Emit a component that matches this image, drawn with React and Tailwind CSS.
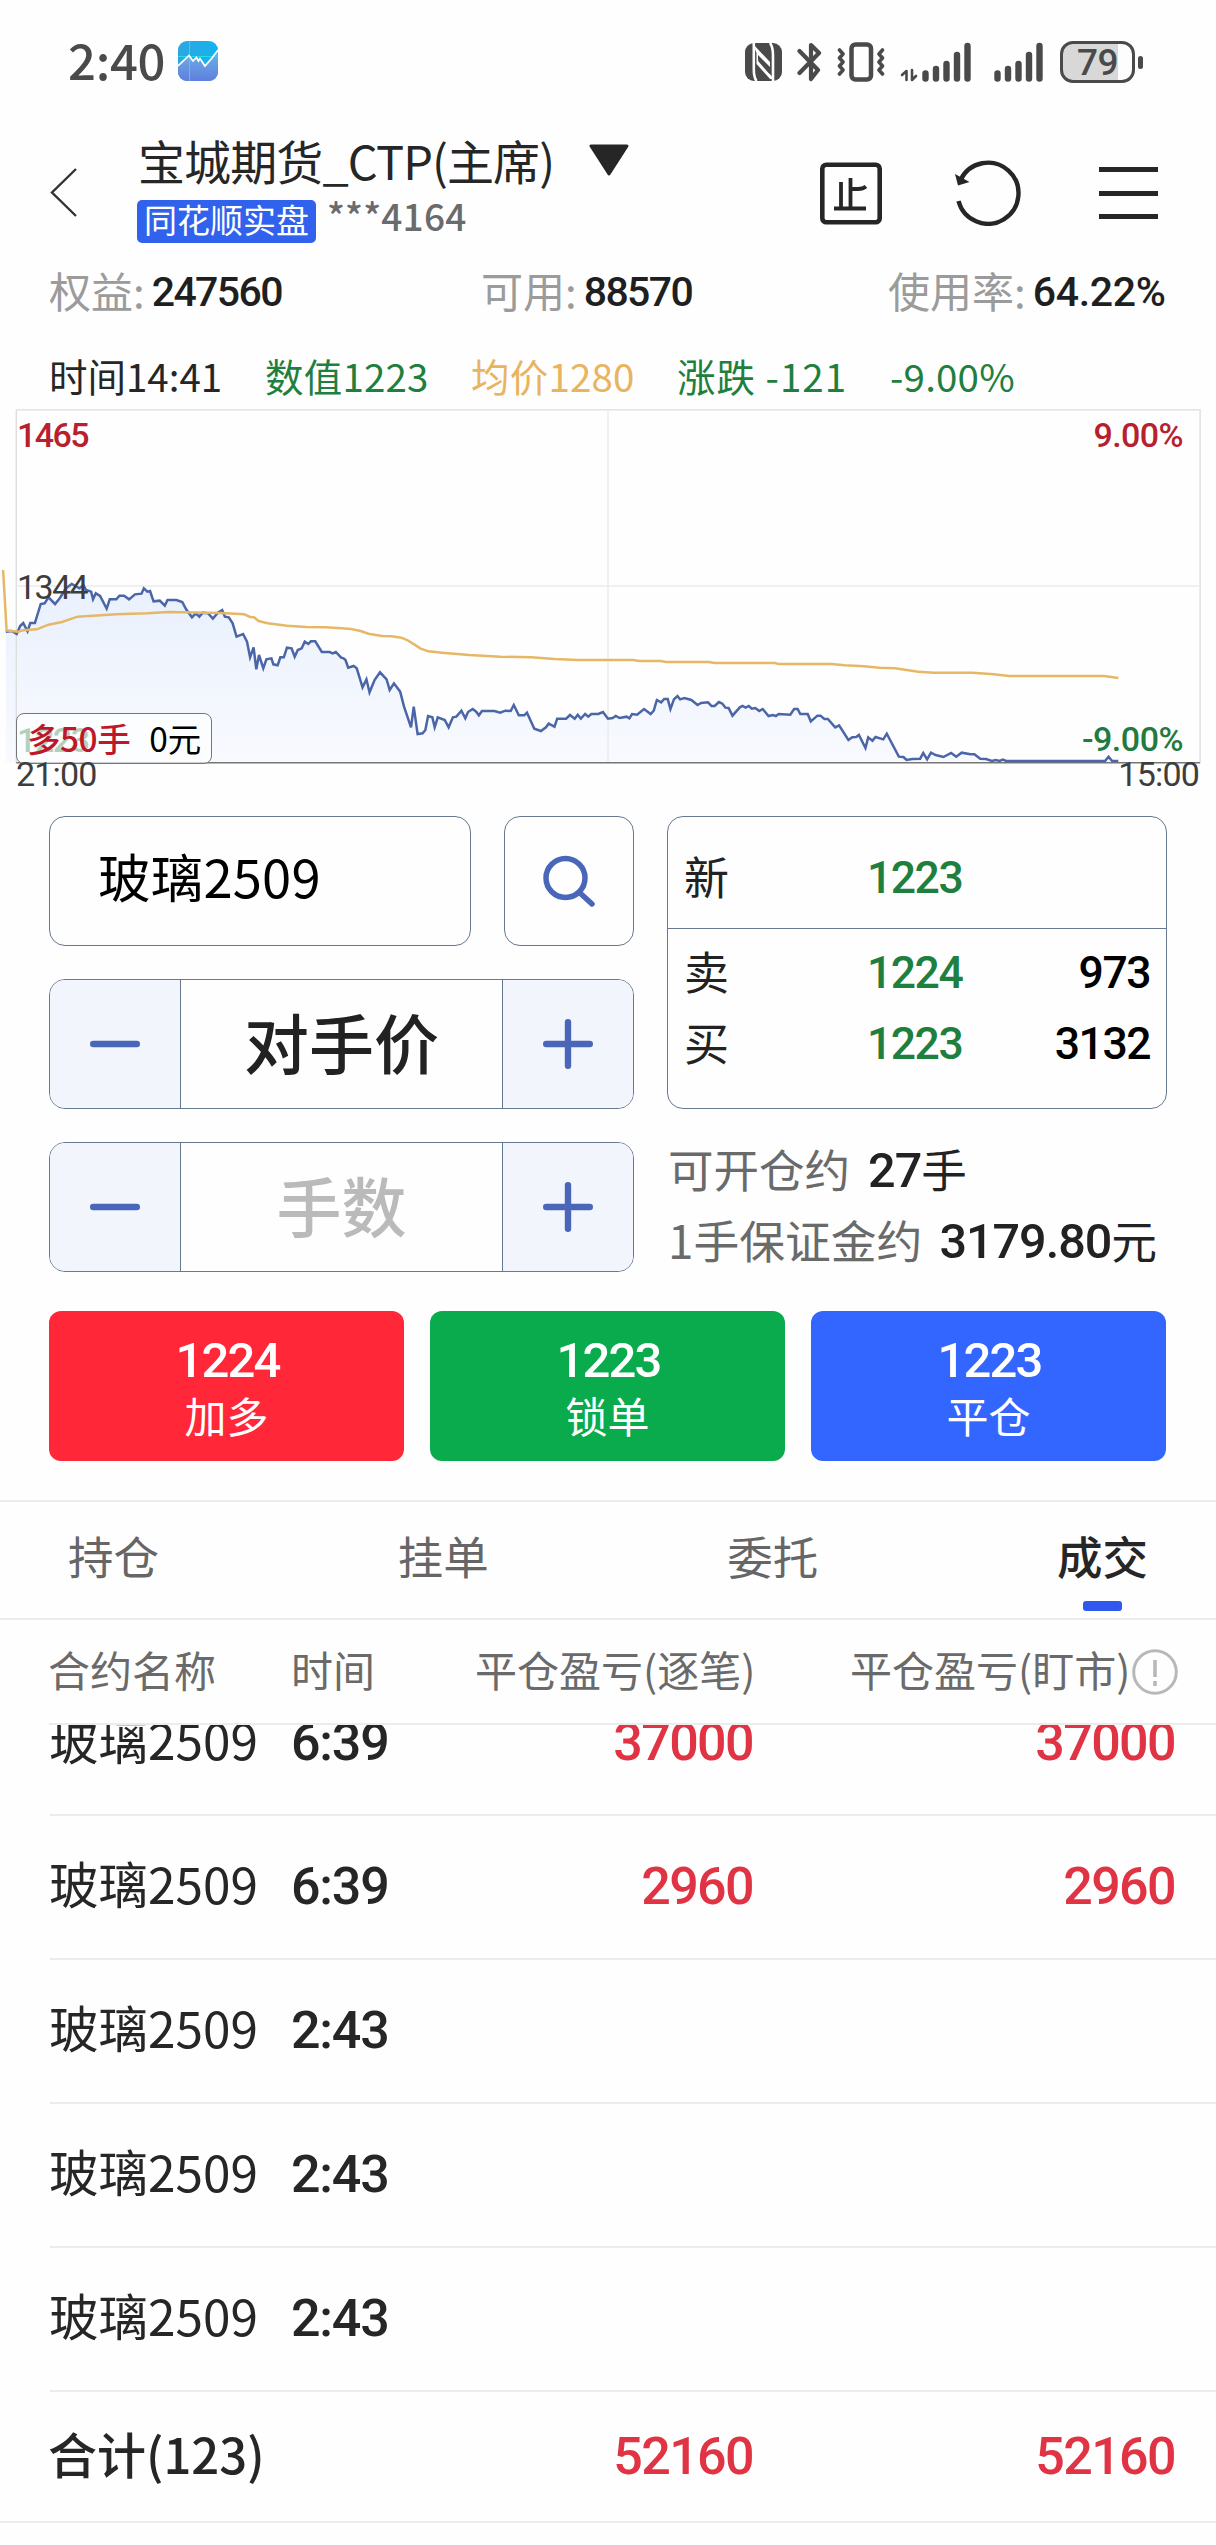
const price = [15,905,30,903,43,912,52,888,60,879,71,904,78,879,90,879,105,822,115,820,125,802,142,822,155,803,170,775,185,762,205,775,215,765,222,780,235,785,240,808,247,790,258,798,275,836,283,808,300,808,308,797,320,797,333,808,348,793,365,791,371,775,380,785,387,783,396,814,412,812,425,827,432,810,455,810,470,816,480,838,495,862,505,850,514,860,523,848,537,850,549,866,562,848,573,840,580,860,590,862,600,880,610,920,627,912,637,935,645,982,654,952,661,1018,668,975,679,1015,687,988,700,985,705,1003,716,1006,723,982,732,982,740,953,752,955,760,980,768,960,778,955,786,935,795,942,802,934,813,934,830,966,850,966,858,970,866,966,880,983,886,985,891,990,898,1013,912,1008,920,1015,935,1072,945,1048,953,1087,966,1050,980,1027,997,1048,1005,1080,1016,1060,1032,1085,1042,1130,1060,1192,1067,1130,1077,1212,1090,1210,1097,1200,1104,1158,1115,1162,1121,1192,1129,1162,1147,1170,1157,1192,1168,1162,1177,1160,1190,1142,1200,1165,1207,1146,1219,1137,1228,1145,1235,1156,1243,1143,1275,1143,1290,1148,1303,1142,1317,1143,1325,1125,1338,1156,1352,1156,1359,1148,1370,1176,1378,1196,1395,1203,1408,1192,1415,1181,1430,1190,1437,1166,1460,1166,1470,1155,1482,1166,1490,1154,1498,1166,1509,1152,1517,1160,1525,1152,1543,1152,1555,1146,1568,1166,1580,1164,1588,1158,1598,1164,1616,1160,1623,1165,1630,1152,1643,1154,1661,1137,1678,1152,1686,1142,1694,1110,1705,1117,1713,1107,1722,1107,1729,1137,1738,1108,1747,1098,1754,1108,1765,1104,1783,1110,1799,1125,1808,1119,1826,1117,1835,1128,1843,1128,1854,1116,1863,1121,1871,1133,1879,1134,1889,1157,1908,1132,1915,1128,1923,1133,1931,1128,1939,1136,1948,1134,1958,1143,1967,1137,1982,1158,1993,1155,2001,1158,2008,1152,2038,1154,2048,1137,2057,1137,2064,1152,2083,1152,2091,1174,2108,1157,2116,1157,2126,1167,2135,1167,2154,1192,2164,1186,2188,1230,2198,1222,2208,1221,2215,1215,2232,1254,2239,1222,2250,1232,2258,1221,2278,1228,2287,1211,2318,1280,2330,1281,2338,1290,2353,1287,2373,1286,2381,1269,2391,1288,2401,1268,2413,1275,2433,1281,2453,1269,2466,1280,2480,1268,2503,1273,2513,1273,2528,1286,2543,1287,2558,1293,2568,1290,2578,1293,2586,1289,2595,1293,2850,1293,2859,1280,2868,1293,2884,1293].join(" ");
const average = [8,720,17,901,45,905,60,901,95,898,125,884,160,876,200,860,240,857,300,853,380,850,435,846,570,849,630,853,645,861,655,862,667,873,690,880,740,887,790,891,840,892,880,895,905,897,930,903,950,911,985,918,1010,919,1035,923,1050,930,1065,941,1085,956,1105,964,1140,968,1210,975,1290,980,1370,982,1430,987,1490,990,1633,990,1648,993,1703,993,1718,996,1828,996,1843,999,1998,999,2008,1002,2143,1002,2178,1006,2228,1009,2268,1013,2308,1015,2368,1025,2408,1028,2508,1028,2563,1033,2603,1038,2848,1038,2884,1044].join(" ");

function T({ className = "", children }) {
  return <span className={`block whitespace-nowrap leading-none pb-[0.13em] ${className}`}>{children}</span>;
}

function D({ className = "", children }) {
  return <span className={`block whitespace-nowrap leading-none font-['Roboto',sans-serif] ${className}`}>{children}</span>;
}

function StatusBar() {
  return (
    <div className="h-[124px] flex items-center pl-[68px] pr-[73px] text-[#4a4a4a]">
      <T className="text-[49px] font-medium tracking-[-0.3px]">2:40</T>
      <svg className="ml-[13px] w-10 h-10 -mt-[2px]" viewBox="0 0 40 40">
        <defs>
          <linearGradient id="app-sky" x1="0" y1="0" x2="1" y2="0"><stop stopColor="#2fa6e0" /><stop offset="1" stopColor="#14b3ef" /></linearGradient>
          <linearGradient id="app-hill" x1="0" y1="0" x2="0" y2="1"><stop stopColor="#6fb4e8" /><stop offset="1" stopColor="#5f7fdc" /></linearGradient>
          <clipPath id="app-clip"><rect width="40" height="40" rx="9" /></clipPath>
        </defs>
        <g clipPath="url(#app-clip)">
          <rect width="40" height="40" fill="url(#app-sky)" />
          <path d="M0 25 11 14 15 20 19 17 27 25 40 9V40H0Z" fill="url(#app-hill)" />
          <path d="M11.5 0V40M0 15.500H40" stroke="#22dcec" strokeWidth="1" />
          <path d="M0 25 11 14.500 15 20 18.500 16.500 20.500 20 22 17.500 27 25 34 17 40 9" fill="none" stroke="#fff" strokeWidth="1.700" />
        </g>
      </svg>
      <svg className="ml-auto w-[37px] h-[38px]" viewBox="0 0 37 38">
        <rect width="37" height="38" rx="9" fill="currentColor" />
        <path d="M8.800 0V26Q8.800 34 11.500 38M28 38V12Q28 4 25 0" fill="none" stroke="#fefefe" strokeWidth="2.600" />
        <path d="M8 1 25 19V24L13 12V17L29 36 25 36 11.500 21V10Z" fill="#fefefe" />
        <path d="M13.500 13.500 24.500 25.500V31L13.500 18.500Z" fill="currentColor" />
      </svg>
      <svg className="ml-[15px] w-[25px] h-10" viewBox="0 0 25 40" fill="none" stroke="currentColor" strokeWidth="4.200" strokeLinejoin="round" strokeLinecap="round">
        <path d="M2.500 9 21 28 14 37V24M14 15V3L22 11 2.500 31" />
      </svg>
      <svg className="ml-[15px] w-12 h-10" viewBox="0 0 48 40" fill="none" stroke="currentColor" strokeLinejoin="round" strokeLinecap="round">
        <rect x="14.500" y="2.500" width="19.500" height="35" rx="4" strokeWidth="4.500" />
        <path d="M2.500 8 6 12 2.500 16 6 20 2.500 24 6 28 2.500 32M45.500 8 42 12 45.500 16 42 20 45.500 24 42 28 45.500 32" strokeWidth="3.600" />
      </svg>
      <svg className="ml-[15px] w-[72px] h-10" viewBox="0 0 72 40" fill="none" stroke="currentColor" strokeLinecap="round">
        <path d="M25.500 31.500V36.500M36 27V36.500M46.500 22V36.500M57 13V36.500M67.500 4V36.500" strokeWidth="6.400" />
        <path d="M6.500 38V29L2 33M12 28V38L16 34" strokeWidth="2.600" strokeLinejoin="round" />
      </svg>
      <svg className="ml-[22px] w-[50px] h-10" viewBox="0 0 50 40" fill="none" stroke="currentColor" strokeLinecap="round" strokeWidth="6.400">
        <path d="M3.500 31.500V36.500M14 27V36.500M24.500 22V36.500M35 13V36.500M45.500 4V36.500" />
      </svg>
      <div className="ml-[16px] w-[75px] h-[42px] rounded-[13px] border-[3px] border-[#4a4a4a] bg-[linear-gradient(90deg,#d8d8d8_79%,#fdfdfd_79%)] flex items-center justify-center">
        <D className="text-[37px] font-medium tracking-[-0.5px]">79</D>
      </div>
      <div className="ml-[3px] w-[5px] h-[13px] rounded-full bg-[#4a4a4a]" />
    </div>
  );
}

function Header() {
  return (
    <div className="h-[138px] flex items-start text-[#262626]">
      <svg className="ml-[50px] mt-[43px] w-7 h-[51px]" viewBox="0 0 28 51" fill="none" stroke="#333" strokeWidth="2.400"><path d="M26 2 2 25.500 26 49" /></svg>
      <div className="ml-[60px] mt-[14px] w-[420px]">
        <div className="h-[50px] flex items-center"><T className="text-[47px] tracking-[-0.9px]">宝城期货_CTP(主席)</T></div>
        <div className="-ml-px mt-[12px] h-[43px] flex items-center">
          <div className="w-[179px] h-[43px] rounded-[5px] bg-[#3062ee] text-white flex items-center justify-center"><T className="text-[33px]">同花顺实盘</T></div>
          <T className="ml-[11px] -mt-[8px] text-[37px] font-medium text-[#6b6b6b] tracking-[0.2px]">***4164</T>
        </div>
      </div>
      <svg className="ml-[31px] mt-[20px] w-10 h-[32px]" viewBox="0 0 40 32"><path d="M2 2H38L20 30Z" fill="#262626" stroke="#262626" strokeWidth="3" strokeLinejoin="round" /></svg>
      <svg className="ml-[191px] mt-[38px] w-[62px] h-[63px]" viewBox="0 0 62 63" fill="none" stroke="#262626" strokeWidth="4.600">
        <rect x="2.300" y="2.800" width="57.400" height="57.500" rx="4" />
        <path d="M14 46.500H46M21 20V46M30.500 16V46M31 27H38Q43 27 46 24.500" strokeWidth="3.800" />
      </svg>
      <svg className="ml-[71px] mt-[36px] w-[68px] h-[66px]" viewBox="0 0 68 66" fill="none" stroke="#262626" strokeWidth="4.400">
        <path d="M5.500 41A30.500 30.500 0 1 0 7.500 20" />
        <path d="M2 14 16.500 22 5 25.500Z" fill="#262626" stroke="none" />
      </svg>
      <div className="ml-[78px] mt-[43px] w-[59px] h-[52px] flex flex-col justify-between">
        <div className="h-[5px] bg-[#262626]" /><div className="h-[5px] bg-[#262626]" /><div className="h-[5px] bg-[#262626]" />
      </div>
    </div>
  );
}

function Stat({ label, value, className, tight = "tracking-[-1.6px]" }) {
  return (
    <div className={`flex items-center ${className}`}>
      <T className="text-[42px] text-[#9b9b9b]">{label}:</T>
      <D className={`ml-[7px] text-[41px] font-medium text-[#1f1f1f] ${tight}`}>{value}</D>
    </div>
  );
}

function Chart() {
  return (
    <div className="relative h-[391px]">
      <svg className="w-full h-[355px]" viewBox="0 237 3136 1065" preserveAspectRatio="none" fill="none">
        <defs><linearGradient id="area" x1="0" y1="0" x2="0" y2="1"><stop stopColor="#e9f0fd" /><stop offset="1" stopColor="#f8fafe" /></linearGradient></defs>
        <polygon points={`15,1298 ${price} 2884,1298`} fill="url(#area)" />
        <path d="M42 239.500H3095V1298M42 239.500V1298" stroke="#dcdcdc" strokeWidth="1.300" vectorEffect="non-scaling-stroke" />
        <path d="M42 768H3095M1568 239V1298" stroke="#ebebeb" strokeWidth="1.500" vectorEffect="non-scaling-stroke" />
        <path d="M42 1298.500H3095" stroke="#777" strokeWidth="1.500" vectorEffect="non-scaling-stroke" />
        <polyline points={price} stroke="#4b66a8" strokeWidth="2.500" vectorEffect="non-scaling-stroke" />
        <polyline points={average} stroke="#e6b866" strokeWidth="2.500" vectorEffect="non-scaling-stroke" />
      </svg>
      <D className="absolute left-[17px] top-[9px] text-[34px] font-medium text-[#b8202e] tracking-[-1.6px]">1465</D>
      <D className="absolute right-[33px] top-[9px] text-[34px] font-medium text-[#b8202e] tracking-[-0.6px]">9.00%</D>
      <D className="absolute left-[17px] top-[161px] text-[34px] text-[#3d3d3d] tracking-[-1.6px]">1344</D>
      <D className="absolute left-[17px] top-[314px] text-[34px] font-medium text-[#227a40] tracking-[-1.4px]">1223</D>
      <div className="absolute left-[16px] top-[304px] w-[196px] h-[51px] rounded-[8px] border-[1.5px] border-[#777] bg-white/65 flex items-center pl-[10px] pt-[2px] text-[33.500px]">
        <T className="text-[#c01628] font-medium tracking-[-0.5px]">多50手</T>
        <T className="ml-[19px] text-black">0元</T>
      </div>
      <D className="absolute right-[33px] top-[313px] text-[34px] font-medium text-[#227a40] tracking-[-0.5px]">-9.00%</D>
      <D className="absolute left-[16px] top-[348px] text-[34px] text-[#3d3d3d] tracking-[-0.8px]">21:00</D>
      <D className="absolute right-[17px] top-[348px] text-[34px] text-[#3d3d3d] tracking-[-0.8px]">15:00</D>
    </div>
  );
}

function Minus() {
  return <svg className="w-[50px] h-[50px]" viewBox="0 0 50 50" stroke="#4a66b8" strokeWidth="6.400" strokeLinecap="round"><path d="M3.200 25H46.800" /></svg>;
}
function Plus() {
  return <svg className="w-[50px] h-[50px]" viewBox="0 0 50 50" stroke="#4a66b8" strokeWidth="6.400" strokeLinecap="round"><path d="M3.200 25H46.800M25 3.200V46.800" /></svg>;
}

function Stepper({ text, className }) {
  return (
    <div className="w-[585px] h-[130px] flex rounded-[16px] border border-[#66798f] overflow-hidden">
      <div className="w-[131px] bg-[#f2f5fc] border-r border-[#66798f] flex items-center justify-center"><Minus /></div>
      <div className="flex-1 pt-[3px] flex items-center justify-center"><T className={`text-[65px] font-medium ${className}`}>{text}</T></div>
      <div className="w-[131px] bg-[#f2f5fc] border-l border-[#66798f] flex items-center justify-center"><Plus /></div>
    </div>
  );
}

function Quote({ label, price, volume }) {
  return (
    <div className="h-[71px] flex items-center pl-[16px] pr-[16px] pt-[2px] text-[44.500px] tracking-[-1.5px]">
      <T className="w-[183px] text-[45px] text-[#222]">{label}</T>
      <D className="font-medium text-[#1f7f3f]">{price}</D>
      <D className="ml-auto font-medium text-black">{volume}</D>
    </div>
  );
}

function TradePanel() {
  return (
    <div className="h-[495px] pt-[16px] pl-[49px] flex">
      <div className="flex flex-col gap-[33px]">
        <div className="flex justify-between w-[585px]">
          <div className="w-[422px] h-[130px] rounded-[16px] border border-[#66798f] flex items-center pl-[48px] pb-[4px]"><T className="text-[52.500px] text-black tracking-[0.2px]">玻璃2509</T></div>
          <div className="w-[130px] h-[130px] rounded-[16px] border border-[#66798f] flex items-center justify-center">
            <svg className="w-[54px] h-[54px]" viewBox="0 0 54 54" fill="none" stroke="#4a66b8" strokeWidth="5.500" strokeLinecap="round"><circle cx="23.500" cy="24" r="19.500" /><path d="M38 39 50 50" /></svg>
          </div>
        </div>
        <Stepper text="对手价" className="text-[#222]" />
        <Stepper text="手数" className="text-[#bababa]" />
      </div>
      <div className="ml-[33px]">
        <div className="w-[500px] h-[293px] rounded-[16px] border border-[#66798f]">
          <div className="h-[112px] border-b border-[#66798f] pt-[25px]"><Quote label="新" price="1223" /></div>
          <div className="pt-[8px]"><Quote label="卖" price="1224" volume="973" /><Quote label="买" price="1223" volume="3132" /></div>
        </div>
        <div className="mt-[27px] h-[71px] flex items-center text-[45.500px]">
          <T className="ml-px text-[#6a6a6a]">可开仓约</T><D className="ml-[18px] text-[48.500px] font-medium text-[#222] tracking-[-0.9px]">27</D><T className="text-[#222]">手</T>
        </div>
        <div className="h-[71px] flex items-center text-[45.800px]">
          <T className="ml-px text-[#6a6a6a]">1手保证金约</T><D className="ml-[17px] text-[48.500px] font-medium text-[#222] tracking-[-1px]">3179.80</D><T className="text-[#222]">元</T>
        </div>
      </div>
    </div>
  );
}

function Action({ price, label, className }) {
  return (
    <div className={`w-[355px] h-[150px] rounded-[12px] text-white flex flex-col items-center pt-[21px] ${className}`}>
      <div className="h-[56px] flex items-center"><D className="ml-[2px] text-[49px] font-medium tracking-[-1.8px]">{price}</D></div>
      <div className="h-[59px] flex items-center"><T className="text-[42px]">{label}</T></div>
    </div>
  );
}

function Trade({ time, profit }) {
  return (
    <div className="h-[144px] ml-[50px] pb-px border-b-2 border-[#ececec] shrink-0 flex items-center text-[52px] font-medium">
      <T className="w-[241px] -ml-px mr-px -mt-[2px] text-[49.500px] font-normal text-[#262626]">玻璃2509</T>
      <D className="w-[150px] text-[#262626] tracking-[-1.2px]">{time}</D>
      <D className="w-[312px] text-right text-[#e03344] tracking-[-1.6px]">{profit}</D>
      <D className="w-[422px] text-right text-[#e03344] tracking-[-1.6px]">{profit}</D>
    </div>
  );
}

export default function App() {
  return (
    <div className="w-[1216px] h-[2545px] overflow-hidden bg-[#fefefe] font-['Noto_Sans_CJK_SC',sans-serif]">
      <StatusBar />
      <Header />
      <div className="h-[58px] pt-[3px] flex items-center">
        <Stat className="ml-[49px] w-[432px]" label="权益" value="247560" />
        <Stat className="w-[407px]" label="可用" value="88570" />
        <Stat label="使用率" value="64.22%" className="" tight="tracking-[-0.3px]" />
      </div>
      <div className="h-[89px] pt-[26px] flex items-center text-[38.500px]">
        <T className="ml-[49px] w-[216px] text-[#262626]">时间14:41</T>
        <T className="w-[206px] text-[#1f7f3f] tracking-[0.2px]">数值1223</T>
        <T className="w-[206px] text-[#e8b460] tracking-[0.2px]">均价1280</T>
        <T className="w-[213px] text-[#1f7f3f] tracking-[1px]">涨跌 -121</T>
        <T className="text-[#1f7f3f] tracking-[0.2px]">-9.00%</T>
      </div>
      <Chart />
      <TradePanel />
      <div className="mt-[16px] h-[189px] ml-[49px] flex gap-[26px]">
        <Action price="1224" label="加多" className="bg-[#ff2738]" />
        <Action price="1223" label="锁单" className="bg-[#0aab4c]" />
        <Action price="1223" label="平仓" className="bg-[#3366ff]" />
      </div>
      <div className="h-[120px] border-y-2 border-[#ececec] flex justify-between pl-[68px] pr-[68px] pt-[31px] text-[45.500px] text-[#666]">
        <T>持仓</T><T>挂单</T><T>委托</T>
        <div className="flex flex-col items-center">
          <T className="font-medium text-[#262626]">成交</T>
          <div className="mt-[17px] w-[39px] h-[10px] rounded-[3px] bg-[#3158ee]" />
        </div>
      </div>
      <div className="h-[105px] ml-[49px] border-b-2 border-[#ececec] flex items-center text-[42px] text-[#6a6a6a]">
        <T className="w-[242px] -ml-px mr-px">合约名称</T>
        <T className="w-[184px]">时间</T>
        <T className="w-[375px]">平仓盈亏(逐笔)</T>
        <T>平仓盈亏(盯市)</T>
        <svg className="ml-[2px] w-[46px] h-[46px]" viewBox="0 0 46 46" fill="none" stroke="#b8b8b8" strokeWidth="3"><circle cx="23" cy="23" r="21.300" /><path d="M23 11V28M23 32V37" strokeWidth="3.600" /></svg>
      </div>
      <div className="h-[667px] overflow-hidden flex flex-col justify-end">
        <Trade time="6:39" profit="37000" />
        <Trade time="6:39" profit="2960" />
        <Trade time="2:43" />
        <Trade time="2:43" />
        <Trade time="2:43" />
      </div>
      <div className="h-[131px] border-b-2 border-[#ececec] pl-[48px] flex items-center text-[52px] font-medium text-[#262626]">
        <T className="w-[393px] -mt-[2px] text-[49px]">合计(123)</T>
        <D className="w-[312px] text-right text-[#e03344] tracking-[-1.6px]">52160</D>
        <D className="w-[422px] text-right text-[#e03344] tracking-[-1.6px]">52160</D>
      </div>
    </div>
  );
}
